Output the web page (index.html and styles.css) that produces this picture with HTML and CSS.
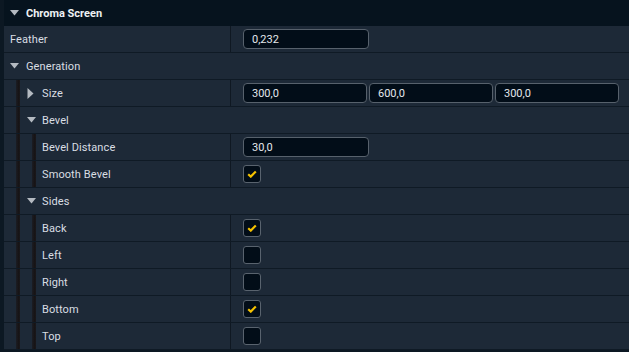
FILE: index.html
```html
<!DOCTYPE html>
<html lang="en">
<head>
    <meta charset="UTF-8">
    <meta name="viewport" content="width=device-width, initial-scale=1.0">
    <title>Chroma Screen</title>
    <link rel="stylesheet" href="styles.css">
</head>
<body>
    <div class="panel">
        <div class="header">
            <span class="arrow"><svg width="9" height="6" viewBox="0 0 9 6"><path d="M0 0 H9 L4.5 5.5 Z" fill="#b4bac1"/></svg></span>
            Chroma Screen
        </div>

        <div class="row">
            <div class="label lvl0">Feather</div>
            <div class="value"><input class="field single" type="text" value="0,232"></div>
        </div>

        <div class="row group">
            <div class="label lvl0 head">
                <span class="arrow"><svg width="9" height="6" viewBox="0 0 9 6"><path d="M0 0 H9 L4.5 5.5 Z" fill="#b4bac1"/></svg></span>
                Generation
            </div>
        </div>

        <div class="row">
            <div class="label lvl1 head">
                <span class="arrow"><svg width="7" height="11" viewBox="0 0 7 11"><path d="M0.5 0 L6.5 5.5 L0.5 11 Z" fill="#b4bac1"/></svg></span>
                Size
            </div>
            <div class="value">
                <div class="triple">
                    <input class="field" type="text" value="300,0">
                    <input class="field" type="text" value="600,0">
                    <input class="field" type="text" value="300,0">
                </div>
            </div>
        </div>

        <div class="row group">
            <div class="label lvl1 head">
                <span class="arrow"><svg width="9" height="6" viewBox="0 0 9 6"><path d="M0 0 H9 L4.5 5.5 Z" fill="#b4bac1"/></svg></span>
                Bevel
            </div>
        </div>

        <div class="row">
            <div class="label lvl2">Bevel Distance</div>
            <div class="value"><input class="field single" type="text" value="30,0"></div>
        </div>

        <div class="row">
            <div class="label lvl2">Smooth Bevel</div>
            <div class="value"><span class="check on"><svg width="10" height="8" viewBox="0 0 10 8"><path d="M1.2 4.2 L3.8 6.6 L8.8 1.4" fill="none" stroke="#f5c200" stroke-width="2.2"/></svg></span></div>
        </div>

        <div class="row group">
            <div class="label lvl1 head">
                <span class="arrow"><svg width="9" height="6" viewBox="0 0 9 6"><path d="M0 0 H9 L4.5 5.5 Z" fill="#b4bac1"/></svg></span>
                Sides
            </div>
        </div>

        <div class="row">
            <div class="label lvl2">Back</div>
            <div class="value"><span class="check on"><svg width="10" height="8" viewBox="0 0 10 8"><path d="M1.2 4.2 L3.8 6.6 L8.8 1.4" fill="none" stroke="#f5c200" stroke-width="2.2"/></svg></span></div>
        </div>
        <div class="row">
            <div class="label lvl2">Left</div>
            <div class="value"><span class="check"></span></div>
        </div>
        <div class="row">
            <div class="label lvl2">Right</div>
            <div class="value"><span class="check"></span></div>
        </div>
        <div class="row">
            <div class="label lvl2">Bottom</div>
            <div class="value"><span class="check on"><svg width="10" height="8" viewBox="0 0 10 8"><path d="M1.2 4.2 L3.8 6.6 L8.8 1.4" fill="none" stroke="#f5c200" stroke-width="2.2"/></svg></span></div>
        </div>
        <div class="row">
            <div class="label lvl2">Top</div>
            <div class="value"><span class="check"></span></div>
        </div>
    </div>
</body>
</html>
```

FILE: styles.css
```css
body {
    margin: 0;
    background-color: #0c1823;
    font-family: Roboto, "Noto Sans", sans-serif;
    font-size: 11px;
    color: #d9dee3;
    height: 352px;
    overflow: hidden;
}

.panel {
    margin-left: 4px;
}

.header {
    height: 26px;
    display: flex;
    align-items: center;
    padding-left: 6px;
    background-color: #06131e;
    color: #eef1f4;
    font-weight: bold;
}

.arrow {
    width: 16px;
    display: flex;
    align-items: center;
    padding-left: 0;
}

.row {
    height: 26px;
    display: flex;
    border-bottom: 1px solid #0f1a25;
    background-color: #1d2937;
}

.label {
    width: 226px;
    flex-shrink: 0;
    display: flex;
    align-items: center;
    box-sizing: border-box;
    letter-spacing: 0.1px;
}

.group .label {
    width: auto;
}

.lvl0 {
    padding-left: 6px;
}
.lvl1 {
    padding-left: 22px;
    background: linear-gradient(to right, transparent 12px, #1b1d24 12px, #161213 15px, #1b1b20 16px, transparent 16px);
}
.lvl1.head .arrow {
    padding-left: 1px;
    width: 15px;
}
.lvl2 {
    padding-left: 38px;
    background: linear-gradient(to right, transparent 12px, #1b1d24 12px, #161213 15px, #1b1b20 16px, transparent 16px,
        transparent 28px, #1b1d24 28px, #161213 31px, #1b1b20 32px, transparent 32px);
}

.value {
    flex: 1;
    display: flex;
    align-items: center;
    padding-left: 12px;
    border-left: 1px solid #0f1822;
}

.field {
    box-sizing: border-box;
    height: 20px;
    width: 124px;
    margin: 0;
    padding: 0 8px;
    background-color: #020d18;
    border: 1px solid #57616c;
    border-radius: 4px;
    color: #e4e8ec;
    font-family: Roboto, "Noto Sans", sans-serif;
    font-size: 11px;
    outline: none;
}
.field.single {
    width: 126px;
}

.triple {
    display: flex;
    gap: 2px;
}

.check {
    box-sizing: border-box;
    width: 18px;
    height: 18px;
    background-color: #020d18;
    border: 1.5px solid #59636e;
    border-radius: 3px;
    display: flex;
    align-items: center;
    justify-content: center;
}
```
